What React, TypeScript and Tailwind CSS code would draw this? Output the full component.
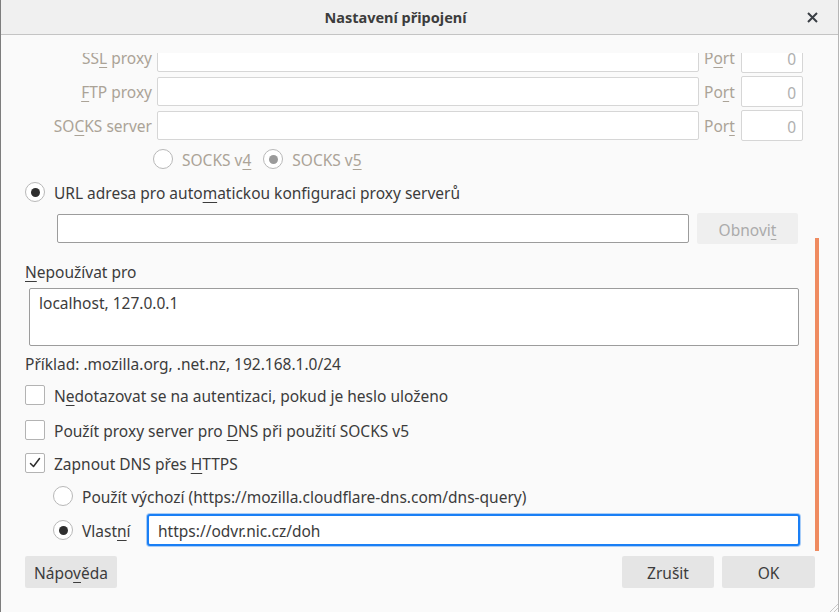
import type { ReactNode } from "react"

function U({ children }: { children: ReactNode }) {
  return <span className="underline underline-offset-[3px] decoration-1">{children}</span>
}

// Noto Sans sits a little high compared to the system font, nudge the glyphs down
function T({ children, className = "" }: { children: ReactNode; className?: string }) {
  return <span className={`relative top-[2px] whitespace-nowrap ${className}`}>{children}</span>
}

function Radio({ checked = false, disabled = false }: { checked?: boolean; disabled?: boolean }) {
  return (
    <span className="w-[20px] h-[20px] rounded-full border border-[#b8b8b8] bg-white flex items-center justify-center shrink-0">
      {checked && (
        <span className={`w-[9px] h-[9px] rounded-full ${disabled ? "bg-[#9a9a9a]" : "bg-[#2e2e2e]"}`} />
      )}
    </span>
  )
}

function Checkbox({ checked = false }: { checked?: boolean }) {
  return (
    <span className="w-[20px] h-[20px] rounded-[2px] border border-[#b3b3b3] bg-white flex items-center justify-center shrink-0">
      {checked && (
        <svg width="14" height="14" viewBox="0 0 14 14" fill="none">
          <path d="M2.5 7.5 L5.5 10.5 L11.5 2.5" stroke="#2e2e2e" strokeWidth="1.5" strokeLinecap="round" strokeLinejoin="round" />
        </svg>
      )}
    </span>
  )
}

function ProxyRow({ label, port }: { label: ReactNode; port: ReactNode }) {
  return (
    <div className="flex items-center h-[28px]">
      <div className="w-[151px] text-right text-[#aba397]">
        <T>{label}</T>
      </div>
      <div className="ml-[5px] w-[542px] h-[29px] border border-[#d6d6d6] rounded-[2px] bg-white" />
      <div className="ml-[5px] w-[33px] text-[#aba397]">
        <T>{port}</T>
      </div>
      <div className="ml-[4px] w-[62px] h-[31px] border border-[#d6d6d6] rounded-[2px] bg-white text-right pr-[6px] text-[#b0b0b0] leading-[29px]">
        <T>0</T>
      </div>
    </div>
  )
}

export default function App() {
  return (
    <div
      className="w-[839px] h-[612px] relative overflow-hidden bg-[#fafafa] border-l border-l-[#7d7d7d] border-r border-r-[#b5b5b5] text-[15.5px] text-[#3c3c3c]"
      style={{ fontFamily: '"Noto Sans", "Open Sans", sans-serif' }}
    >
      {/* title bar */}
      <div className="h-[35px] bg-[#f0f0f0] border-b border-[#c4c4c4] flex items-center justify-center pr-[48px] relative">
        <span className="relative top-[1px] text-[14.5px] font-bold text-[#3c3c3c]">Nastavení připojení</span>
        <svg className="absolute left-[806px] top-[12px]" width="11" height="11" viewBox="0 0 11 11">
          <path d="M1 1 L10 10 M10 1 L1 10" stroke="#3a3f45" strokeWidth="2" />
        </svg>
      </div>

      {/* scroll viewport */}
      <div className="mt-[18px] h-[498px] overflow-hidden relative">
        <div className="-mt-[10px] flex flex-col">
          <ProxyRow label={<>SS<U>L</U> proxy</>} port={<>P<U>o</U>rt</>} />
          <div className="mt-[6px]">
            <ProxyRow label={<><U>F</U>TP proxy</>} port={<>Po<U>r</U>t</>} />
          </div>
          <div className="mt-[6px]">
            <ProxyRow label={<>SO<U>C</U>KS server</>} port={<>Por<U>t</U></>} />
          </div>

          <div className="mt-[10px] h-[20px] flex items-center pl-[152px] text-[#aba397]">
            <Radio />
            <T className="ml-[9px]">SOCKS v<U>4</U></T>
            <span className="ml-[12px]"><Radio checked disabled /></span>
            <T className="ml-[9px]">SOCKS v<U>5</U></T>
          </div>

          <div className="mt-[13px] h-[20px] flex items-center pl-[24px]">
            <Radio checked />
            <T className="ml-[9px]">URL adresa pro auto<U>m</U>atickou konfiguraci proxy serverů</T>
          </div>

          <div className="mt-[11px] h-[31px] flex items-center pl-[56px]">
            <div className="w-[632px] h-[29px] border border-[#9c9c9c] rounded-[2px] bg-white" />
            <div className="ml-[8px] w-[101px] h-[31px] bg-[#efefef] rounded-[2px] flex items-center justify-center text-[#ababab]">
              <T>Obnovi<U>t</U></T>
            </div>
          </div>

          <div className="mt-[17px] h-[20px] flex items-center pl-[24px]">
            <T><U>N</U>epoužívat pro</T>
          </div>

          <div className="mt-[7px] ml-[28px] w-[770px] h-[58px] border border-[#9c9c9c] rounded-[2px] bg-white px-[9px] pt-[3px]">
            localhost, 127.0.0.1
          </div>

          <div className="mt-[7px] h-[20px] flex items-center pl-[24px]">
            <T>Příklad: .mozilla.org, .net.nz, 192.168.1.0/24</T>
          </div>

          <div className="mt-[12px] h-[20px] flex items-center pl-[24px]">
            <Checkbox />
            <T className="ml-[9px]">N<U>e</U>dotazovat se na autentizaci, pokud je heslo uloženo</T>
          </div>

          <div className="mt-[15px] h-[20px] flex items-center pl-[24px]">
            <Checkbox />
            <T className="ml-[9px]">Použít proxy server pro <U>D</U>NS při použití SOCKS v5</T>
          </div>

          <div className="mt-[13px] h-[20px] flex items-center pl-[24px]">
            <Checkbox checked />
            <T className="ml-[9px]">Zapnout DNS přes <U>H</U>TTPS</T>
          </div>

          <div className="mt-[13px] h-[20px] flex items-center pl-[52px]">
            <Radio />
            <T className="ml-[9px]">Použít výchozí (https://mozilla.cloudflare-dns.com/dns-query)</T>
          </div>

          <div className="mt-[8px] h-[32px] flex items-center pl-[52px]">
            <Radio checked />
            <T className="ml-[9px] w-[65px]">Vlast<U>n</U>í</T>
            <div className="w-[653px] h-[32px] border-2 border-[#1a7ff5] rounded-[3px] bg-white shadow-[0_0_0_1px_#a9cdf7] flex items-center pl-[9px]">
              <T>https://odvr.nic.cz/doh</T>
            </div>
          </div>
        </div>

        {/* overlay scrollbar */}
        <div className="absolute left-[814px] top-[185px] w-[4px] h-[313px] bg-[#ef8b60]" />
      </div>

      {/* buttons */}
      <div className="mt-[5px] h-[32px] flex items-center pl-[24px] pr-[23px]">
        <div className="w-[92px] h-[32px] bg-[#e5e5e5] rounded-[2px] flex items-center justify-center">
          <T>Nápo<U>v</U>ěda</T>
        </div>
        <div className="flex-1" />
        <div className="w-[92px] h-[32px] bg-[#e5e5e5] rounded-[2px] flex items-center justify-center">
          <T>Zrušit</T>
        </div>
        <div className="ml-[8px] w-[93px] h-[32px] bg-[#e5e5e5] rounded-[2px] flex items-center justify-center">
          <T>OK</T>
        </div>
      </div>

      {/* resize grip */}
      <svg className="absolute right-0 bottom-0" width="10" height="10" viewBox="0 0 10 10">
        <path d="M10 2 L2 10 M10 6 L6 10" stroke="#c8c8c8" strokeWidth="1" />
      </svg>
    </div>
  )
}
